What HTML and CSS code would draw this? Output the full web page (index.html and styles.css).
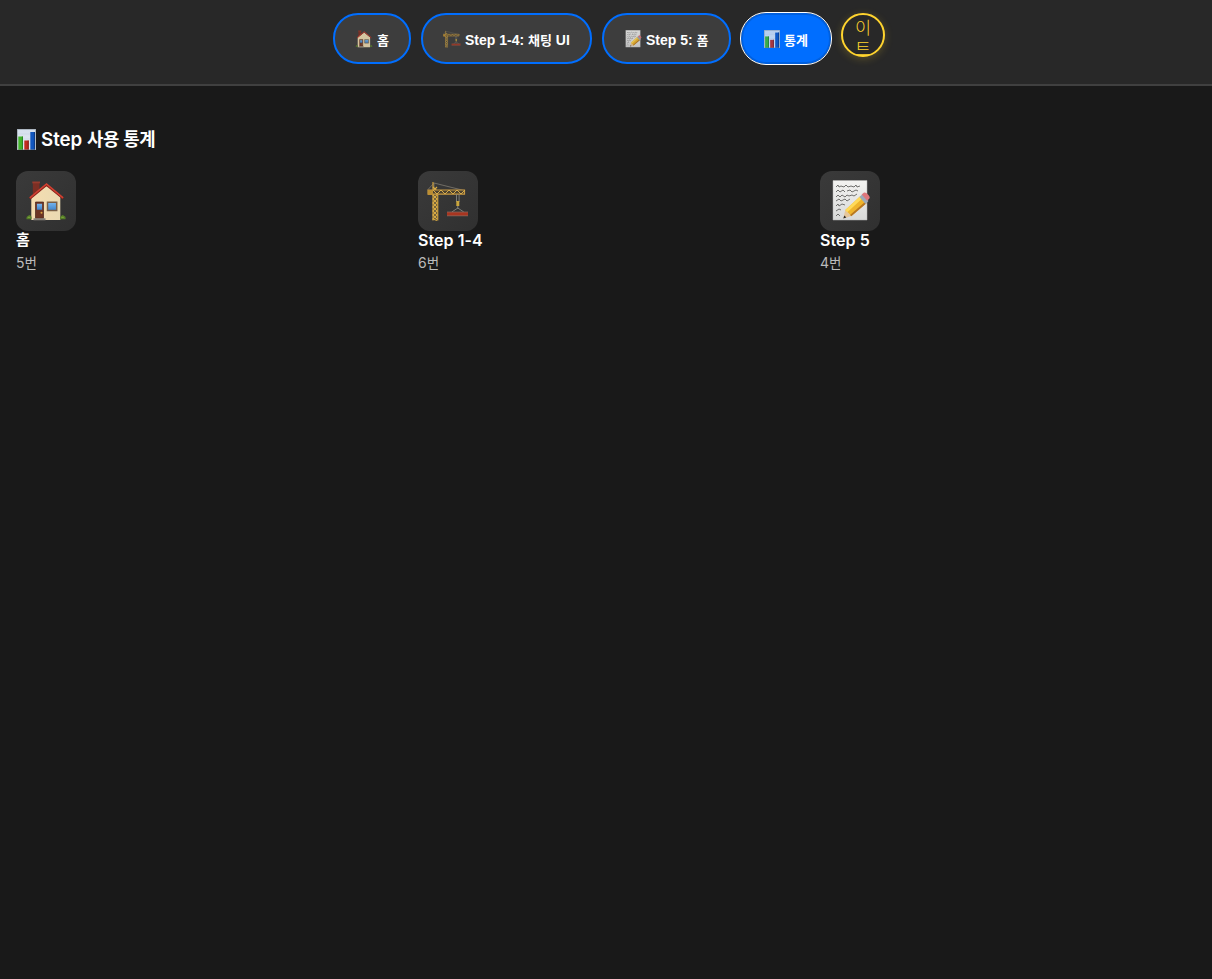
FILE: index.html
```html
<!DOCTYPE html>
<html lang="ko">
<head>
<meta charset="UTF-8">
<title>Step 사용 통계</title>
<link rel="stylesheet" href="styles.css">
</head>
<body>
<svg class="sprite" aria-hidden="true">
  <defs>
    <linearGradient id="wall" x2="1"><stop stop-color="#f5ddb0"/><stop offset="1" stop-color="#eadab2"/></linearGradient>
    <linearGradient id="glass" x2="0" y2="1"><stop stop-color="#78b7ef"/><stop offset="1" stop-color="#3e82c9"/></linearGradient>
    <linearGradient id="paper" x2="0" y2="1"><stop stop-color="#f3f3f1"/><stop offset="1" stop-color="#d8d9d8"/></linearGradient>
    <linearGradient id="panel" x2="0" y2="1"><stop stop-color="#d5dfec"/><stop offset="1" stop-color="#e6ecf3"/></linearGradient>
  </defs>
  <symbol id="house" viewBox="1.5 1 42 42">
    <path d="M9.3 3h6.7v9l-6.7 5.5z" fill="#7c2f24"/><path d="M8.8 2.5h7.7v1.8H8.8z" fill="#963a2d"/>
    <path d="M7.8 18 23 6l13.8 12v23h-29z" fill="url(#wall)"/>
    <path d="M6.3 19.6 23 6l16.6 13.6" fill="none" stroke="#8a2018" stroke-width="2"/>
    <path d="M6.3 18.8 23 5l16.6 13.8" fill="none" stroke="#cf4132" stroke-width="1.6"/>
    <path d="M12 23h8v16.3h-8z" fill="#6d3524" stroke="#48251b" stroke-width=".7"/>
    <path d="M13.4 24.7h5.2v6h-5.2z" fill="url(#glass)"/><circle cx="18" cy="33.7" r="1" fill="#dba443"/>
    <path d="M10 39.3h12v2H10z" fill="#85817a"/>
    <path d="M24 23.3h9.2v8.3H24z" fill="url(#glass)" stroke="#796047" stroke-width="1.5"/>
    <path d="M3 40.3q-.4-3 1.6-3.3 1.3-2 2.8 0 1 .3.6 3.3zm33.6 0q-.5-3 1.2-3.3 1.3-2 2.8 0 2 .3 1.4 3.3z" fill="#547c28"/>
    <path d="M4.3 38.3h2.5m31 0h2.5" stroke="#81a83e" stroke-width="1"/>
  </symbol>
  <symbol id="crane" viewBox="1 1 42 42">
    <path d="M2 10.5 8 4l30 7.5M8 4v8" fill="none" stroke="#77736a" stroke-width=".9"/>
    <path d="M7 3v38.5M11.7 11v30.5" stroke="#c3983d" stroke-width="1.3"/>
    <path d="m7 8 4 4-4 4 4 4-4 4 4 4-4 4 4 4-4 4 4 1.5M11 8l-4 4 4 4-4 4 4 4-4 4 4 4-4 4 4 4" fill="none" stroke="#d6aa45" stroke-width="1.2"/>
    <path d="M2 11h36.5v4.2H2z" fill="#4b4230" stroke="#c99a42" stroke-width="1.2"/>
    <path d="m3 15 4-4 4 4 4-4 4 4 4-4 4 4 4-4 4 4 4-4" fill="none" stroke="#d8ab49" stroke-width="1"/>
    <path d="M2 11h5v5H2z" fill="#bb8e33"/>
    <path d="M30.5 15v8m2.6-8v8M31.8 27v3m-6 3 6-4 6 4" fill="none" stroke="#85857f" stroke-width=".9"/>
    <path d="M30.3 22h3v5h-3z" fill="#c9a53d"/>
    <path d="M21 33h21v4H21z" fill="#a83520"/><path d="M21 33h21M21 36.8h21" stroke="#87655b" stroke-width=".8"/>
  </symbol>
  <symbol id="memo" viewBox="1 1 42 42">
    <path d="M5 1.5h34v39.5H5z" fill="url(#paper)" stroke="#b7b7b5" stroke-width=".5"/>
    <path d="m8 8 2-2 1 2 2-1 3 1 2-2 2 2 3-1 3 1 2-2 1 2 3-1M8 13l2-2 2 2 3-2 2 2m2-1 3-1 2 2 4-2 2 1M8 18l2-2 2 2 2-2 3 2 2-2 2 1 3-1 2 1 3-2M8 22l3-2 2 2 4-2 2 2 3-2M8 27l2-2 1 2 3-2 3 1M8 32l3-2 2 1M8 37l2-2 2 2" fill="none" stroke="#626260" stroke-width=".9"/>
    <path d="m17 40 22-18-3 4-19 14z" fill="#898984" opacity=".5"/>
    <path d="m15.3 39.5 2-8.5 6 6z" fill="#e6c69b"/><path d="m15.3 39.5 1-3 2 2z" fill="#292725"/>
    <path d="M17.3 31 32.5 17l6 7-15.2 13z" fill="#efb52d"/><path d="M17.3 31 32.5 17l2 2.3-15.2 14z" fill="#ffda58"/>
    <path d="m22 36 15.2-13.2 1.3 1.4-15.2 13z" fill="#b77722"/>
    <path d="m31.5 18 3-3 6 7-3 3z" fill="#9cabb9"/>
    <path d="m33.7 15.5 2-1.8q2-.8 4.5 2t1 4l-2 2z" fill="#df777c"/>
  </symbol>
  <symbol id="chart" viewBox="0 0 19 21" preserveAspectRatio="none">
    <path d="M0 0h19v21H0z" fill="url(#panel)"/>
    <path d="M0 5h19M0 10h19M0 15h19" stroke="#bdcddd" stroke-width=".4"/>
    <path d="M1.3 7.5h4.6V21H1.3z" fill="#43b52c"/><path d="M4.9 7.5h1V21h-1z" fill="#278222"/>
    <path d="M7.3 11.5h4.4V21H7.3z" fill="#c12d20"/><path d="M10.7 11.5h1V21h-1z" fill="#861e18"/>
    <path d="M13.3 3h4.6v18h-4.6z" fill="#1156be"/><path d="M16.9 3h1v18h-1z" fill="#083781"/>
    <path d="M.3.3h18.4v20.4H.3z" fill="none" stroke="#7d8791" stroke-width=".6"/>
  </symbol>
</svg>
<nav class="nav">
  <button class="tab tab-home"><svg class="tab-icon"><use href="#house"/></svg><span class="ko">홈</span></button>
  <button class="tab tab-chat"><svg class="tab-icon"><use href="#crane"/></svg><span>Step 1-4: <span class="ko">채팅</span> UI</span></button>
  <button class="tab tab-form"><svg class="tab-icon"><use href="#memo"/></svg><span>Step 5: <span class="ko">폼</span></span></button>
  <button class="tab tab-stats active"><svg class="tab-icon chart-icon"><use href="#chart"/></svg><span class="ko">통계</span></button>
  <button class="theme"><span>이<br>트</span></button>
</nav>
<main class="content">
  <h1 class="title"><svg class="title-icon"><use href="#chart"/></svg><span>Step <span class="title-ko">사용 통계</span></span></h1>
  <div class="stats">
    <section><div class="tile"><svg class="tile-icon"><use href="#house"/></svg></div><h2 class="name name-ko">홈</h2><p class="count">5<span>번</span></p></section>
    <section><div class="tile"><svg class="tile-icon"><use href="#crane"/></svg></div><h2 class="name">Step 1-4</h2><p class="count">6<span>번</span></p></section>
    <section><div class="tile"><svg class="tile-icon"><use href="#memo"/></svg></div><h2 class="name">Step 5</h2><p class="count">4<span>번</span></p></section>
  </div>
</main>
</body>
</html>
```
FILE: styles.css
```css
* { box-sizing: border-box; }
body { margin: 0; min-height: 979px; background: #191919; color: #fff; font-family: Inter, "Noto Sans CJK KR", sans-serif; }
.sprite { position: absolute; width: 0; height: 0; }
.nav { display: flex; align-items: flex-start; justify-content: center; gap: 10px; height: 86px; padding: 13px 0 0 6px; background: #282828; border-bottom: 2px solid #404040; }
.tab { display: flex; align-items: center; gap: 4px; height: 51px; padding: 2px 0 0 20px; border: 2px solid #006eff; border-radius: 25px; background: #3d3d3d; color: #fff; font: 700 14px/16px "Liberation Sans", "Noto Sans CJK KR", sans-serif; white-space: nowrap; }
.tab > span { padding-top: 2px; }
.tab .ko { font-size: 13px; }
.tab-home { width: 78px; }
.tab-chat { width: 171px; }
.tab-form { width: 129px; }
.tab-stats { width: 90px; }
.active { background: #006eff; border-color: #0060df; outline: 1px solid #fff; }
.tab-icon { width: 18px; height: 18px; flex: none; margin-top: -2px; opacity: .86; }
.chart-icon { width: 16px; margin-left: 1px; }
.theme { width: 44px; height: 44px; padding: 1px 0 0; border: 2px solid #ffd42e; border-radius: 50%; background: #282828; color: #ffd42e; box-shadow: 0 2px 8px rgba(255, 212, 46, .22); font: 300 17.5px/21px "Noto Sans CJK KR", sans-serif; }
.theme span { display: block; }
.content { padding: 40px 16px; }
.title { display: flex; align-items: center; gap: 5px; height: 27px; margin: 0 0 18px; padding-left: 1px; font-size: 18.7px; font-weight: 600; line-height: 27px; }
.title-ko { font-size: 17.8px; letter-spacing: -.3px; }
.title-icon { width: 19px; height: 21px; }
.stats { display: grid; grid-template-columns: repeat(3, 376px); gap: 26px; }
.tile { display: grid; place-items: center; width: 60px; height: 60px; border-radius: 12px; background: linear-gradient(135deg, #3a3a3a, #303030); }
.tile-icon { width: 42px; height: 42px; }
.name { margin: 0; height: 20px; font-size: 16px; font-weight: 600; line-height: 18px; letter-spacing: .06px; }
.name-ko { font-size: 15px; }
.count { margin: 2px 0 0; color: #bbb; font-size: 14px; line-height: 20px; }
.count span { font-size: 13.5px; }
```
